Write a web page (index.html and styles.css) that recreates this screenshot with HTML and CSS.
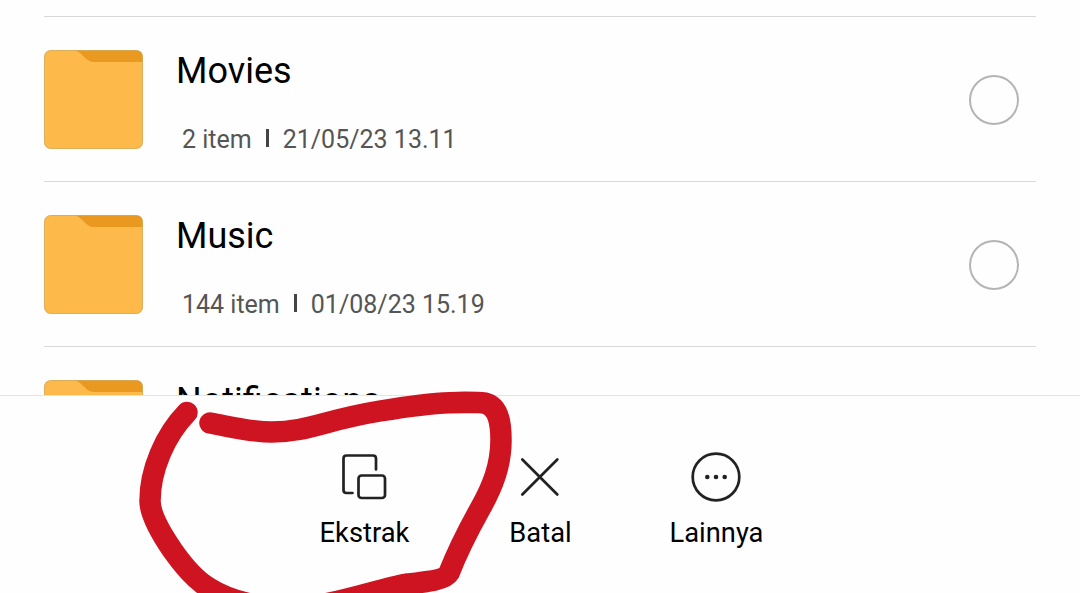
FILE: index.html
```html
<!DOCTYPE html>
<html lang="id">
<head>
    <meta charset="UTF-8">
    <meta name="viewport" content="width=device-width, initial-scale=1.0">
    <title>File Manager</title>
    <link rel="stylesheet" href="styles.css">
</head>
<body>
    <svg class="defs" width="0" height="0">
        <symbol id="folder" viewBox="0 0 99 99">
            <rect x="0.5" y="0.5" width="98" height="98" rx="6" fill="#fdba4b"/>
            <path d="M31 0.5H92.5Q98.5 0.5 98.5 6.5V12H50Q46 12 43 9.500L36 3Q34 1 31 0.500Z" fill="#e9991f"/>
            <rect x="0.5" y="0.5" width="98" height="98" rx="6" fill="none" stroke="#d2a24a" stroke-opacity="0.8"/>
        </symbol>
    </svg>

    <div class="screen">
        <div class="file-list">
            <div class="file-row">
                <svg class="folder"><use href="#folder"/></svg>
                <div class="file-info">
                    <div class="file-name">Movies</div>
                    <div class="file-meta"><span>2 item</span><span class="divider"></span><span>21/05/23 13.11</span></div>
                </div>
                <div class="radio"></div>
            </div>
            <div class="file-row">
                <svg class="folder"><use href="#folder"/></svg>
                <div class="file-info">
                    <div class="file-name">Music</div>
                    <div class="file-meta"><span>144 item</span><span class="divider"></span><span>01/08/23 15.19</span></div>
                </div>
                <div class="radio"></div>
            </div>
            <div class="file-row">
                <svg class="folder"><use href="#folder"/></svg>
                <div class="file-info">
                    <div class="file-name">Notifications</div>
                </div>
            </div>
        </div>

        <div class="toolbar">
            <div class="action">
                <svg class="action-icon" viewBox="0 0 52 52">
                    <path d="M14.500 42H8.500Q5.500 42 5.500 39V7.500Q5.500 4.500 8.500 4.500H35Q38 4.500 38 7.500V18.500"/>
                    <rect x="20.500" y="24.500" width="26.500" height="22.500" rx="3"/>
                </svg>
                <div class="action-label">Ekstrak</div>
            </div>
            <div class="action">
                <svg class="action-icon" viewBox="0 0 52 52">
                    <path d="M8.300 8.500L43.300 43.500M43.300 8.500L8.300 43.500"/>
                </svg>
                <div class="action-label">Batal</div>
            </div>
            <div class="action">
                <svg class="action-icon" viewBox="0 0 52 52">
                    <circle cx="26" cy="26" r="23.300"/>
                    <g class="dots">
                        <circle cx="17.300" cy="26" r="2.300"/>
                        <circle cx="26" cy="26" r="2.300"/>
                        <circle cx="34.700" cy="26" r="2.300"/>
                    </g>
                </svg>
                <div class="action-label">Lainnya</div>
            </div>
        </div>

        <!-- hand drawn marker around Ekstrak -->
        <svg class="marker" viewBox="0 0 1080 593">
            <path d="M187 412.500C165 435 150 470 150 501C150 515 162 535 173 551C185 568 197 581 209 588C220 595 232 600 250 604"/>
            <path d="M210 423C232 427 250 432 272 432C307 432 325 420 380 411C410 406 440 403 450 402.700C465 402 474 402.500 482 402.700C498 404 501 421 501 440C501 465 493 486 480 509C470 527 458 550 449 573C445 580 425 582 407 584C385 588 355 598 325 604"/>
        </svg>
    </div>
</body>
</html>
```

FILE: styles.css
```css
body {
    margin: 0;
    background: #fefefe;
    font-family: Roboto, sans-serif;
    color: #000;
}
.defs {
    position: absolute;
}
.screen {
    position: relative;
    display: flex;
    flex-direction: column;
    width: 1080px;
    height: 593px;
    overflow: hidden;
}
.file-list {
    height: 379px;
    padding: 16px 44px 0;
    overflow: hidden;
}
.file-row {
    display: flex;
    align-items: flex-start;
    box-sizing: border-box;
    height: 165px;
    border-top: 1px solid #d8d8d8;
    padding-top: 33px;
}
.folder {
    width: 99px;
    height: 99px;
    flex: none;
}
.file-info {
    flex: 1;
    margin-left: 33px;
}
.file-name {
    font-size: 36px;
    line-height: 42px;
}
.file-meta {
    display: flex;
    align-items: center;
    margin: 33px 0 0 6px;
    font-size: 25px;
    line-height: 30px;
    color: #555;
}
.divider {
    width: 3px;
    height: 18px;
    margin: 0 14px 4px;
    background: #444;
}
.radio {
    box-sizing: border-box;
    width: 50px;
    height: 50px;
    margin: 25px 17px 0 0;
    border: 2px solid #b4b4b4;
    border-radius: 50%;
}
.toolbar {
    display: flex;
    flex: 1;
    justify-content: center;
    border-top: 1px solid #e4e4e4;
    padding-top: 55px;
}
.action {
    display: flex;
    flex-direction: column;
    align-items: center;
    width: 176px;
}
.action-icon {
    width: 52px;
    height: 52px;
    fill: none;
    stroke: #222;
    stroke-width: 2.7;
    stroke-linecap: round;
    stroke-linejoin: round;
}
.dots {
    fill: #222;
    stroke: none;
}
.action-label {
    margin-top: 13px;
    padding-left: 1px;
    font-size: 27.3px;
    line-height: 34px;
}
.marker {
    position: absolute;
    top: 0;
    left: 0;
    width: 1080px;
    height: 593px;
    fill: none;
    stroke: #cf1421;
    stroke-width: 21.5;
    stroke-linecap: round;
    stroke-linejoin: round;
}
```
